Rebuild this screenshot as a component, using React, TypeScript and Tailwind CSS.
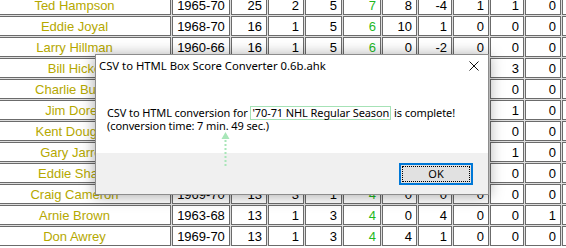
import React from "react";

type Row = { name: string; vals: string[] };

const rows: Row[] = [
  { name: "Ted Hampson", vals: ["1965-70", "25", "2", "5", "7", "8", "-4", "1", "1", "0", "0"] },
  { name: "Eddie Joyal", vals: ["1968-70", "16", "1", "5", "6", "10", "1", "0", "0", "0", "0"] },
  { name: "Larry Hillman", vals: ["1960-66", "16", "1", "5", "6", "0", "-2", "0", "0", "0", "0"] },
  { name: "Bill Hicke", vals: ["1967-70", "15", "1", "5", "6", "2", "0", "0", "3", "0", "0"] },
  { name: "Charlie Burns", vals: ["1967-70", "15", "2", "3", "5", "4", "-1", "0", "0", "0", "0"] },
  { name: "Jim Dorey", vals: ["1968-70", "14", "1", "4", "5", "12", "2", "0", "1", "0", "0"] },
  { name: "Kent Douglas", vals: ["1962-67", "14", "2", "2", "4", "6", "0", "0", "0", "0", "0"] },
  { name: "Gary Jarrett", vals: ["1960-67", "14", "2", "2", "4", "2", "1", "0", "1", "0", "0"] },
  { name: "Eddie Shack", vals: ["1960-67", "13", "2", "2", "4", "8", "0", "0", "0", "0", "0"] },
  { name: "Craig Cameron", vals: ["1969-70", "13", "3", "1", "4", "0", "0", "0", "0", "0", "0"] },
  { name: "Arnie Brown", vals: ["1963-68", "13", "1", "3", "4", "0", "4", "0", "0", "1", "0"] },
  { name: "Don Awrey", vals: ["1969-70", "13", "1", "3", "4", "4", "1", "0", "0", "0", "0"] },
];

const widths = [
  "w-[58px]",
  "w-[36px]",
  "w-[36px]",
  "w-[37px]",
  "w-[38px]",
  "w-[35px]",
  "w-[34px]",
  "w-[36px]",
  "w-[34px]",
  "w-[36px]",
  "w-[40px]",
];

function Cell({ v, i }: { v: string; i: number }) {
  const align = i === 0 ? "justify-center" : "justify-end pr-[4px]";
  const color = i === 4 ? "text-[#1fb81f]" : "text-black";
  return (
    <div
      className={`${widths[i]} h-[20px] shrink-0 border border-[#6b6b6b] bg-white flex items-center ${align} ${color}`}
    >
      {v}
    </div>
  );
}

export default function App() {
  return (
    <div className="relative w-[566px] h-[248px] overflow-hidden bg-white">
      <div className="mt-[-5px] ml-[-22px] flex flex-col gap-[1px] bg-[#dedede] w-max font-['Liberation_Sans',Arial,sans-serif] text-[13px] leading-none">
        {rows.map((r) => (
          <div key={r.name} className="flex gap-[1px]">
            <div className="w-[193px] h-[20px] shrink-0 border border-[#6b6b6b] bg-white flex items-center justify-center text-[#b5a800]">
              {r.name}
            </div>
            {r.vals.map((v, i) => (
              <Cell key={i} v={v} i={i} />
            ))}
          </div>
        ))}
      </div>

      <div className="absolute left-[95px] top-[54px] w-[394px] h-[141px] border border-[#8c8c8c] bg-white shadow-[0_1px_14px_rgba(0,0,0,0.35)] flex flex-col font-['Noto_Sans',sans-serif] text-[11px] text-black">
        <div className="h-[21px] shrink-0 flex items-center justify-between pl-[3px] pr-[9px]">
          <span className="leading-none text-[11.3px]">CSV to HTML Box Score Converter 0.6b.ahk</span>
          <svg width="10" height="10" viewBox="0 0 10 10">
            <path d="M0.5 0.5 L9.5 9.5 M9.5 0.5 L0.5 9.5" stroke="#111" strokeWidth="1" fill="none" />
          </svg>
        </div>
        <div className="flex-1 pl-[11px] pt-[30px] leading-[12px] tracking-[-0.1px]">
          <div className="whitespace-nowrap">
            CSV to HTML conversion for{" "}
            <span className="inline-block h-[14px] leading-[12px] border border-[#a6e2b6] px-[1px]">
              '70-71 NHL Regular Season
            </span>{" "}
            is complete!
          </div>
          <div className="whitespace-nowrap">(conversion time: 7 min. 49 sec.)</div>
        </div>
        <div className="h-[41px] shrink-0 bg-[#f0f0f0] flex items-center justify-end pr-[15px]">
          <div className="w-[74px] h-[22px] border-2 border-[#0078d7] bg-[#e1e1e1] p-[1px]">
            <div className="w-full h-full border border-dotted border-black flex items-center justify-center leading-none">
              OK
            </div>
          </div>
        </div>
      </div>

      <svg className="absolute left-[221px] top-[132px]" width="9" height="36" viewBox="0 0 9 36">
        <path d="M4.5 0 L8.5 7 L0.5 7 Z" fill="#a8e6b8" />
        <path d="M4.5 8 L4.5 36" stroke="#a8e6b8" strokeWidth="2" strokeDasharray="2 2" />
      </svg>
    </div>
  );
}
